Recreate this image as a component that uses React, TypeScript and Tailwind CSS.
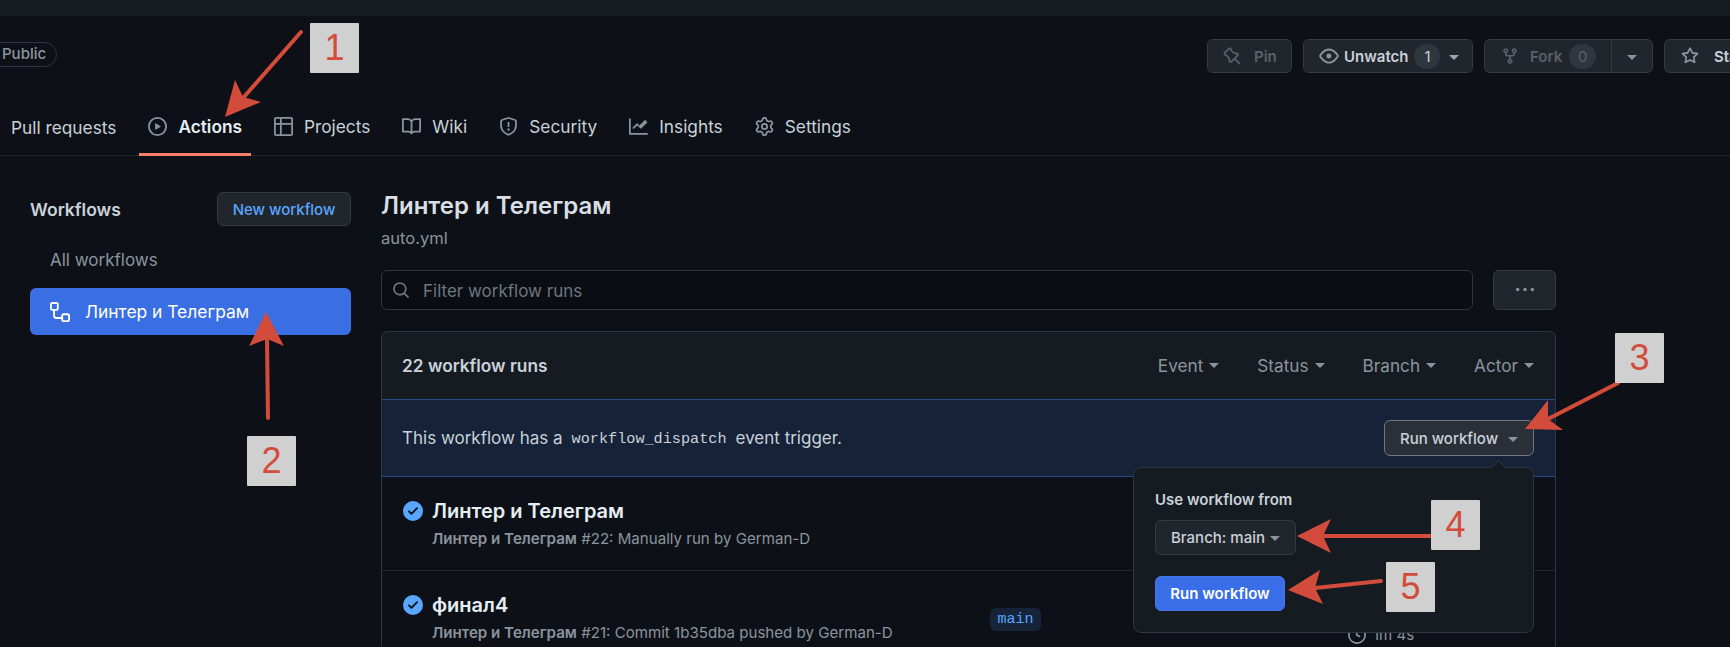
import type { ReactNode } from 'react';

const paths = {
  play: 'M8 0a8 8 0 1 1 0 16A8 8 0 0 1 8 0ZM1.5 8a6.5 6.5 0 1 0 13 0 6.5 6.5 0 0 0-13 0Zm4.879-2.773 4.264 2.559a.25.25 0 0 1 0 .428l-4.264 2.559A.25.25 0 0 1 6 10.559V5.442a.25.25 0 0 1 .379-.215Z',
  table: 'M0 1.75C0 .784.784 0 1.75 0h12.5C15.216 0 16 .784 16 1.75v12.5A1.75 1.75 0 0 1 14.25 16H1.75A1.75 1.75 0 0 1 0 14.25ZM6.5 6.5v8h7.75a.25.25 0 0 0 .25-.25V6.5Zm8-1.5V1.75a.25.25 0 0 0-.25-.25H6.5V5Zm-13 1.5v7.75c0 .138.112.25.25.25H5v-8ZM5 5V1.5H1.75a.25.25 0 0 0-.25.25V5Z',
  book: 'M0 1.75A.75.75 0 0 1 .75 1h4.253c1.227 0 2.317.59 3 1.501A3.743 3.743 0 0 1 11.006 1h4.245a.75.75 0 0 1 .75.75v10.5a.75.75 0 0 1-.75.75h-4.507a2.25 2.25 0 0 0-1.591.659l-.622.621a.75.75 0 0 1-1.06 0l-.622-.621A2.25 2.25 0 0 0 5.258 13H.75a.75.75 0 0 1-.75-.75Zm7.251 10.324.004-5.073-.002-2.253A2.25 2.25 0 0 0 5.003 2.5H1.5v9h3.757a3.75 3.75 0 0 1 1.994.574ZM8.755 4.75l-.004 7.322a3.752 3.752 0 0 1 1.992-.572H14.5v-9h-3.495a2.25 2.25 0 0 0-2.25 2.25Z',
  shield: 'M7.467.133a1.748 1.748 0 0 1 1.066 0l5.25 1.68A1.75 1.75 0 0 1 15 3.48V7c0 1.566-.32 3.182-1.303 4.682-.983 1.498-2.585 2.813-5.032 3.855a1.697 1.697 0 0 1-1.33 0c-2.447-1.042-4.049-2.357-5.032-3.855C1.32 10.182 1 8.566 1 7V3.48a1.75 1.75 0 0 1 1.217-1.667Zm.61 1.429a.25.25 0 0 0-.153 0l-5.25 1.68a.25.25 0 0 0-.174.238V7c0 1.358.275 2.666 1.057 3.86.784 1.194 2.121 2.34 4.366 3.297a.196.196 0 0 0 .154 0c2.245-.956 3.582-2.104 4.366-3.298C13.225 9.666 13.5 8.36 13.5 7V3.48a.251.251 0 0 0-.174-.237l-5.25-1.68ZM8.75 4.75v3a.75.75 0 0 1-1.5 0v-3a.75.75 0 0 1 1.5 0ZM9 10.5a1 1 0 1 1-2 0 1 1 0 0 1 2 0Z',
  graph: 'M1.5 1.75V13.5h13.75a.75.75 0 0 1 0 1.5H.75a.75.75 0 0 1-.75-.75V1.75a.75.75 0 0 1 1.5 0Zm14.28 2.53-5.25 5.25a.75.75 0 0 1-1.06 0L7 7.06 4.28 9.78a.751.751 0 0 1-1.042-.018.751.751 0 0 1-.018-1.042l3.25-3.25a.75.75 0 0 1 1.06 0L8.5 7.44l4.72-4.72a.751.751 0 0 1 1.042.018.751.751 0 0 1 .018 1.042Z',
  gear: 'M8 0a8.2 8.2 0 0 1 .701.031C9.444.095 9.99.645 10.16 1.29l.288 1.107c.018.066.079.158.212.224.231.114.454.243.668.386.123.082.233.09.299.071l1.103-.303c.644-.176 1.392.021 1.82.63.27.385.506.792.704 1.218.315.675.111 1.422-.364 1.891l-.814.806c-.049.048-.098.147-.088.294.016.257.016.515 0 .772-.01.147.038.246.088.294l.814.806c.475.469.679 1.216.364 1.891a7.977 7.977 0 0 1-.704 1.217c-.428.61-1.176.807-1.82.63l-1.102-.302c-.067-.019-.177-.011-.3.071a5.909 5.909 0 0 1-.668.386c-.133.066-.194.158-.211.224l-.29 1.106c-.168.646-.715 1.196-1.458 1.26a8.006 8.006 0 0 1-1.402 0c-.743-.064-1.289-.614-1.458-1.26l-.289-1.106c-.018-.066-.079-.158-.212-.224a5.738 5.738 0 0 1-.668-.386c-.123-.082-.233-.09-.299-.071l-1.103.303c-.644.176-1.392-.021-1.82-.63a8.12 8.12 0 0 1-.704-1.218c-.315-.675-.111-1.422.363-1.891l.815-.806c.05-.048.098-.147.088-.294a6.214 6.214 0 0 1 0-.772c.01-.147-.038-.246-.088-.294l-.815-.806C.635 6.045.431 5.298.746 4.623a7.92 7.92 0 0 1 .704-1.217c.428-.61 1.176-.807 1.82-.63l1.102.302c.067.019.177.011.3-.071.214-.143.437-.272.668-.386.133-.066.194-.158.211-.224l.29-1.106C6.009.645 6.556.095 7.299.03 7.53.01 7.764 0 8 0Zm-.571 1.525c-.036.003-.108.036-.137.146l-.289 1.105c-.147.561-.549.967-.998 1.189-.173.086-.34.183-.5.29-.417.278-.97.423-1.529.27l-1.103-.303c-.109-.03-.175.016-.195.045-.22.312-.412.644-.573.99-.014.031-.021.11.059.19l.815.806c.411.406.562.957.53 1.456a4.709 4.709 0 0 0 0 .582c.032.499-.119 1.05-.53 1.456l-.815.806c-.081.08-.073.159-.059.19.162.346.353.677.573.989.02.03.085.076.195.046l1.102-.303c.56-.153 1.113-.008 1.53.27.161.107.328.204.501.29.447.222.85.629.997 1.189l.289 1.105c.029.109.101.143.137.146a6.6 6.6 0 0 0 1.142 0c.036-.003.108-.036.137-.146l.289-1.105c.147-.561.549-.967.998-1.189.173-.086.34-.183.5-.29.417-.278.97-.423 1.529-.27l1.103.303c.109.029.175-.016.195-.045.22-.313.411-.644.573-.99.014-.031.021-.11-.059-.19l-.815-.806c-.411-.406-.562-.957-.53-1.456a4.709 4.709 0 0 0 0-.582c-.032-.499.119-1.05.53-1.456l.815-.806c.081-.08.073-.159.059-.19a6.464 6.464 0 0 0-.573-.989c-.02-.03-.085-.076-.195-.046l-1.102.303c-.56.153-1.113.008-1.53-.27a4.44 4.44 0 0 0-.501-.29c-.447-.222-.85-.629-.997-1.189l-.289-1.105c-.029-.11-.101-.143-.137-.146a6.6 6.6 0 0 0-1.142 0ZM11 8a3 3 0 1 1-6 0 3 3 0 0 1 6 0ZM9.5 8a1.5 1.5 0 1 0-3.001.001A1.5 1.5 0 0 0 9.5 8Z',
  pin: 'm11.294.984 3.722 3.722a1.75 1.75 0 0 1-.504 2.826l-1.327.613a3.089 3.089 0 0 0-1.707 2.084l-.584 2.454c-.317 1.332-1.972 1.8-2.94.832L5.75 11.311 1.78 15.28a.749.749 0 1 1-1.06-1.06l3.969-3.97-2.204-2.204c-.968-.968-.5-2.623.832-2.94l2.454-.584a3.08 3.08 0 0 0 2.084-1.707l.613-1.327a1.75 1.75 0 0 1 2.826-.504ZM6.283 9.723l2.732 2.731a.25.25 0 0 0 .42-.119l.584-2.454a4.586 4.586 0 0 1 2.537-3.098l1.328-.613a.25.25 0 0 0 .072-.404l-3.722-3.722a.25.25 0 0 0-.404.072l-.613 1.328a4.584 4.584 0 0 1-3.098 2.537l-2.454.584a.25.25 0 0 0-.119.42l2.731 2.732Z',
  eye: 'M8 2c1.981 0 3.671.992 4.933 2.078 1.27 1.091 2.187 2.345 2.637 3.023a1.62 1.62 0 0 1 0 1.798c-.45.678-1.367 1.932-2.637 3.023C11.67 13.008 9.981 14 8 14c-1.981 0-3.671-.992-4.933-2.078C1.797 10.83.88 9.576.43 8.898a1.62 1.62 0 0 1 0-1.798c.45-.677 1.367-1.931 2.637-3.022C4.33 2.992 6.019 2 8 2ZM1.679 7.932a.12.12 0 0 0 0 .136c.411.622 1.241 1.75 2.366 2.717C5.176 11.758 6.527 12.5 8 12.5c1.473 0 2.825-.742 3.955-1.715 1.124-.967 1.954-2.096 2.366-2.717a.12.12 0 0 0 0-.136c-.412-.621-1.242-1.75-2.366-2.717C10.824 4.242 9.473 3.5 8 3.5c-1.473 0-2.825.742-3.955 1.715-1.124.967-1.954 2.096-2.366 2.717ZM8 10a2 2 0 1 1-.001-3.999A2 2 0 0 1 8 10Z',
  fork: 'M5 5.372v.878c0 .414.336.75.75.75h4.5a.75.75 0 0 0 .75-.75v-.878a2.25 2.25 0 1 1 1.5 0v.878a2.25 2.25 0 0 1-2.25 2.25h-1.5v2.128a2.251 2.251 0 1 1-1.5 0V8.5h-1.5A2.25 2.25 0 0 1 3.5 6.25v-.878a2.25 2.25 0 1 1 1.5 0ZM5 3.25a.75.75 0 1 0-1.5 0 .75.75 0 0 0 1.5 0Zm6.75.75a.75.75 0 1 0 0-1.5.75.75 0 0 0 0 1.5Zm-3 8.75a.75.75 0 1 0-1.5 0 .75.75 0 0 0 1.5 0Z',
  star: 'M8 .25a.75.75 0 0 1 .673.418l1.882 3.815 4.21.612a.75.75 0 0 1 .416 1.279l-3.046 2.97.719 4.192a.751.751 0 0 1-1.088.791L8 12.347l-3.766 1.98a.75.75 0 0 1-1.088-.79l.72-4.194L.818 6.374a.75.75 0 0 1 .416-1.28l4.21-.611L7.327.668A.75.75 0 0 1 8 .25Zm0 2.445L6.615 5.5a.75.75 0 0 1-.564.41l-3.097.45 2.24 2.184a.75.75 0 0 1 .216.664l-.528 3.084 2.769-1.456a.75.75 0 0 1 .698 0l2.77 1.456-.53-3.084a.75.75 0 0 1 .216-.664l2.24-2.183-3.096-.45a.75.75 0 0 1-.564-.41L8 2.694Z',
  search: 'M10.68 11.74a6 6 0 0 1-7.922-8.982 6 6 0 0 1 8.982 7.922l3.04 3.04a.749.749 0 0 1-.326 1.275.749.749 0 0 1-.734-.215ZM11.5 7a4.499 4.499 0 1 0-8.997 0A4.499 4.499 0 0 0 11.5 7Z',
  workflow: 'M0 1.75C0 .784.784 0 1.75 0h3.5C6.216 0 7 .784 7 1.75v3.5A1.75 1.75 0 0 1 5.25 7H4v4a1 1 0 0 0 1 1h4v-1.25C9 9.784 9.784 9 10.75 9h3.5c.966 0 1.75.784 1.75 1.75v3.5A1.75 1.75 0 0 1 14.25 16h-3.5A1.75 1.75 0 0 1 9 14.25v-.75H5A2.5 2.5 0 0 1 2.5 11V7h-.75A1.75 1.75 0 0 1 0 5.25Zm1.75-.25a.25.25 0 0 0-.25.25v3.5c0 .138.112.25.25.25h3.5a.25.25 0 0 0 .25-.25v-3.5a.25.25 0 0 0-.25-.25Zm9 9a.25.25 0 0 0-.25.25v3.5c0 .138.112.25.25.25h3.5a.25.25 0 0 0 .25-.25v-3.5a.25.25 0 0 0-.25-.25Z',
  kebab: 'M8 9a1.5 1.5 0 1 0 0-3 1.5 1.5 0 0 0 0 3ZM1.5 9a1.5 1.5 0 1 0 0-3 1.5 1.5 0 0 0 0 3Zm13 0a1.5 1.5 0 1 0 0-3 1.5 1.5 0 0 0 0 3Z',
  check: 'M8 16A8 8 0 1 1 8 0a8 8 0 0 1 0 16Zm3.78-9.72a.751.751 0 0 0-.018-1.042.751.751 0 0 0-1.042-.018L6.75 9.19 5.28 7.72a.751.751 0 0 0-1.042.018.751.751 0 0 0-.018 1.042l2 2a.75.75 0 0 0 1.06 0Z',
  clock: 'M8 0a8 8 0 1 1 0 16A8 8 0 0 1 8 0ZM1.5 8a6.5 6.5 0 1 0 13 0 6.5 6.5 0 0 0-13 0Zm7-3.25v2.992l2.028.812a.75.75 0 0 1-.557 1.392l-2.5-1A.751.751 0 0 1 7 8.25v-3.5a.75.75 0 0 1 1.5 0Z',
};

function Icon({ d, className }: { d: string; className: string }) {
  return (
    <svg viewBox="0 0 16 16" fill="currentColor" className={className}>
      <path d={d} fillRule="evenodd" />
    </svg>
  );
}

function Caret({ className = 'border-t-[#8b949e]' }: { className?: string }) {
  return <span className={`inline-block w-0 h-0 border-x-[5px] border-x-transparent border-t-[5px] ${className}`} />;
}

function Button({ children, className = '' }: { children: ReactNode; className?: string }) {
  return (
    <div className={`h-[34px] flex items-center rounded-md border border-[#363b42] bg-[#21262d] ${className}`}>
      {children}
    </div>
  );
}

const tabs = [
  { label: 'Actions', icon: paths.play, active: true },
  { label: 'Projects', icon: paths.table },
  { label: 'Wiki', icon: paths.book },
  { label: 'Security', icon: paths.shield },
  { label: 'Insights', icon: paths.graph },
  { label: 'Settings', icon: paths.gear },
];

function Header() {
  return (
    <>
      <div className="h-4 bg-[#161b22]" />
      <div className="flex justify-between items-start pt-[23px]">
        <div className="mt-[3px] -ml-6 h-[25px] pl-[25px] pr-[10px] flex items-center rounded-full border border-[#30363d] text-[15px] font-medium text-[#8b949e]">
          Public
        </div>
        <div className="flex gap-[11px] -mr-[54px] text-[15px] font-semibold">
          <Button className="w-[85px] pl-[15px] gap-[13px] text-[#5b6168]">
            <Icon d={paths.pin} className="w-[18px] h-[18px] -scale-x-100" />
            <span className="pt-[2px]">Pin</span>
          </Button>
          <Button className="w-[170px] pl-[15px] text-[#c9d1d9]">
            <Icon d={paths.eye} className="w-5 h-5 text-[#8b949e]" />
            <span className="ml-[5px] pt-[2px]">Unwatch</span>
            <span className="ml-[6px] w-[26px] h-[25px] pt-[2px] rounded-full bg-[#30363d] flex items-center justify-center font-normal">1</span>
            <Caret className="ml-[9px] mt-[2px] border-t-[#9da5ad]" />
          </Button>
          <Button className="w-[169px] text-[#5b6168]">
            <div className="w-[127px] h-full flex items-center pl-[16px] border-r border-[#363b42]">
              <Icon d={paths.fork} className="w-[18px] h-[18px]" />
              <span className="ml-[11px] pt-[2px]">Fork</span>
              <span className="ml-[7px] w-[27px] h-[25px] pt-[2px] rounded-full bg-[#30363d] flex items-center justify-center font-normal">0</span>
            </div>
            <Caret className="ml-[15px] mt-[2px] border-t-[#8b949e]" />
          </Button>
          <Button className="w-[120px] pl-4 text-[#c9d1d9]">
            <Icon d={paths.star} className="w-[18px] h-[18px] text-[#8b949e]" />
            <span className="ml-[15px] pt-[2px]">Star</span>
          </Button>
        </div>
      </div>
      <nav className="mt-[27px] h-[56px] flex items-stretch border-b border-[#21262d] pl-[2px] gap-[14px] text-[17.3px] text-[#c9d1d9]">
        <div className="px-[9px] flex items-center">Pull requests</div>
        {tabs.map((tab) => (
          <div
            key={tab.label}
            className={`px-[9px] flex items-center gap-[11px] -mb-px border-b-[3px] ${tab.active ? 'border-[#f78166] font-semibold text-[#e6edf3]' : 'border-transparent'}`}
          >
            <Icon d={tab.icon} className="w-[19px] h-[19px] text-[#8b949e]" />
            <span>{tab.label}</span>
          </div>
        ))}
      </nav>
    </>
  );
}

function Sidebar() {
  return (
    <aside className="ml-[30px] w-[321px] pt-[36px] shrink-0">
      <div className="flex items-center justify-between">
        <div className="pt-[2px] text-[17.5px] font-semibold text-[#c9d1d9]">Workflows</div>
        <div className="h-[34px] w-[134px] pt-[2px] flex items-center justify-center rounded-md border border-[#363b42] bg-[#21262d] text-[15px] font-medium text-[#58a6ff]">
          New workflow
        </div>
      </div>
      <div className="mt-[18px] pl-[20px] pt-[2px] h-[32px] flex items-center text-[17px] text-[#8b949e]">All workflows</div>
      <div className="mt-[12px] h-[47px] rounded-md bg-[#3a6ee3] flex items-center pl-[20px] text-[17.4px] text-white">
        <Icon d={paths.workflow} className="w-5 h-5" />
        <span className="ml-[15px] pt-[2px]">Линтер и Телеграм</span>
      </div>
    </aside>
  );
}

function RunRow({ title, sub, tag, time }: { title: string; sub: ReactNode; tag?: string; time?: string }) {
  return (
    <div className="h-[94px] border-b border-[#21262d] flex pl-[21px]">
      <div className="w-[587px] shrink-0 pt-[21px]">
        <div className="flex items-center h-[26px]">
          <Icon d={paths.check} className="w-5 h-5 text-[#58a6ff]" />
          <span className="ml-[9px] text-[20px] font-semibold text-[#e6edf3]">{title}</span>
        </div>
        <div className="mt-[4px] ml-[29px] text-[15.1px] text-[#8b949e]">{sub}</div>
      </div>
      {tag && (
        <div className="w-[358px] shrink-0 pt-[34px]">
          <span className="inline-block h-[23px] w-[51px] text-center leading-[23px] rounded-md bg-[#172339] font-['Liberation_Mono',monospace] text-[15px] text-[#58a6ff]">
            {tag}
          </span>
        </div>
      )}
      {time && (
        <div className="pt-[53px] flex items-center self-start gap-[7px] text-[15px] text-[#8b949e]">
          <Icon d={paths.clock} className="w-[18px] h-[18px]" />
          {time}
        </div>
      )}
    </div>
  );
}

function Popover() {
  return (
    <div className="absolute right-[21px] top-[67px] w-[401px] h-[166px] rounded-lg border border-[#30363d] bg-[#161b22] pl-[21px] pt-[21px] z-10">
      <div className="absolute -top-[6px] right-[29px] w-[11px] h-[11px] rotate-45 border-l border-t border-[#30363d] bg-[#161b22]" />
      <div className="text-[15px] font-semibold leading-[21px] text-[#c9d1d9]">Use workflow from</div>
      <div className="mt-[10px] w-[141px] h-[35px] pt-[1px] flex items-center gap-[5px] pl-[15px] rounded-md border border-[#363b42] bg-[#21262d] text-[15px] font-medium text-[#c9d1d9]">
        Branch: main <Caret />
      </div>
      <div className="mt-[21px] w-[130px] h-[35px] pt-[1px] flex items-center justify-center rounded-md border border-[#4477e6] bg-[#3a6ee8] text-[15px] font-semibold text-white">
        Run workflow
      </div>
    </div>
  );
}

function Main() {
  const filters = ['Event', 'Status', 'Branch', 'Actor'];
  return (
    <main className="ml-[30px] w-[1175px] pt-[35px] shrink-0">
      <h1 className="text-[24px] leading-[30px] font-semibold text-[#d8dee4]">Линтер и Телеграм</h1>
      <div className="mt-[5px] h-[23px] leading-[24px] text-[16.5px] text-[#8b949e]">auto.yml</div>
      <div className="mt-[21px] flex gap-[20px]">
        <div className="w-[1092px] h-[40px] rounded-md border border-[#30363d] bg-[#0a0d12] flex items-center pl-[10px] text-[17px] text-[#6e7681]">
          <Icon d={paths.search} className="w-[18px] h-[18px]" />
          <span className="ml-[13px] pt-[3px]">Filter workflow runs</span>
        </div>
        <div className="w-[63px] h-[40px] rounded-md border border-[#363b42] bg-[#21262d] flex items-center justify-center text-[#8b949e]">
          <Icon d={paths.kebab} className="w-[18px] h-[18px]" />
        </div>
      </div>
      <div className="mt-[21px] border-x border-[#30363d] rounded-t-md">
        <div className="h-[68px] pl-[20px] pr-[21px] flex items-center justify-between bg-[#161b22] border-t border-[#30363d] rounded-t-md">
          <div className="text-[17.3px] font-semibold text-[#c9d1d9]">22 workflow runs</div>
          <div className="flex gap-[38px] pt-[1px] text-[17.2px] text-[#8b949e]">
            {filters.map((f) => (
              <div key={f} className="flex items-center gap-[6px]">
                {f} <Caret />
              </div>
            ))}
          </div>
        </div>
        <div className="relative h-[78px] pl-[20px] pr-[21px] flex items-center justify-between bg-[#152238] border-y border-[#264a85] text-[17px] text-[#c9d1d9]">
          <div className="flex items-center pt-[2px]">
            This workflow has a
            <span className="mx-[9px] font-['Liberation_Mono',monospace] text-[15.2px]">workflow_dispatch</span>
            event trigger.
          </div>
          <div className="w-[150px] h-[36px] pt-[2px] flex items-center justify-center gap-[10px] rounded-md border border-[#6e7681] bg-[#2b3038] text-[15px] font-medium text-[#c9d1d9]">
            Run workflow <Caret />
          </div>
          <Popover />
        </div>
        <RunRow title="Линтер и Телеграм" sub={<><b className="font-semibold">Линтер и Телеграм</b> #22: Manually run by German-D</>} />
        <RunRow title="финал4" tag="main" time="1m 4s" sub={<><b className="font-semibold">Линтер и Телеграм</b> #21: Commit 1b35dba pushed by German-D</>} />
      </div>
    </main>
  );
}

// numbered callouts pasted on top of the screenshot
const callouts = [
  { n: 1, className: 'left-[310px] top-[23px]' },
  { n: 2, className: 'left-[247px] top-[436px]' },
  { n: 3, className: 'left-[1615px] top-[333px]' },
  { n: 4, className: 'left-[1431px] top-[500px]' },
  { n: 5, className: 'left-[1386px] top-[562px]' },
];

function Annotations() {
  return (
    <>
      <svg className="absolute inset-0 z-20 pointer-events-none" width="1730" height="647" fill="#d34b3a" stroke="#d34b3a">
        <g strokeWidth="4" strokeLinecap="round">
          <path d="M301 32 243 98" />
          <path d="M268 418 267 340" />
          <path d="M1618 383 1548 419" />
          <path d="M1431 536H1323" />
          <path d="M1381 581 1315 588" />
        </g>
        <g stroke="none">
          <path d="M225 117 235 80 243 97 261 102Z" />
          <path d="M266 312 284 346 267 339 249 346Z" />
          <path d="M1525 429 1548 400 1548 419 1563 430Z" />
          <path d="M1297 536 1331 519 1323 536 1331 553Z" />
          <path d="M1288 590 1320 570 1315 588 1323 604Z" />
        </g>
      </svg>
      {callouts.map((c) => (
        <div
          key={c.n}
          className={`absolute z-20 w-[49px] h-[50px] bg-[#d0d0d0] rounded-[1px] flex items-center justify-center font-['Liberation_Sans',sans-serif] text-[36px] text-[#d34b3a] ${c.className}`}
        >
          {c.n}
        </div>
      ))}
    </>
  );
}

export default function App() {
  return (
    <div className="relative w-[1730px] h-[647px] overflow-hidden bg-[#0d1117] font-['Inter','Noto_Sans',sans-serif]">
      <Header />
      <div className="flex">
        <Sidebar />
        <Main />
      </div>
      <Annotations />
    </div>
  );
}
